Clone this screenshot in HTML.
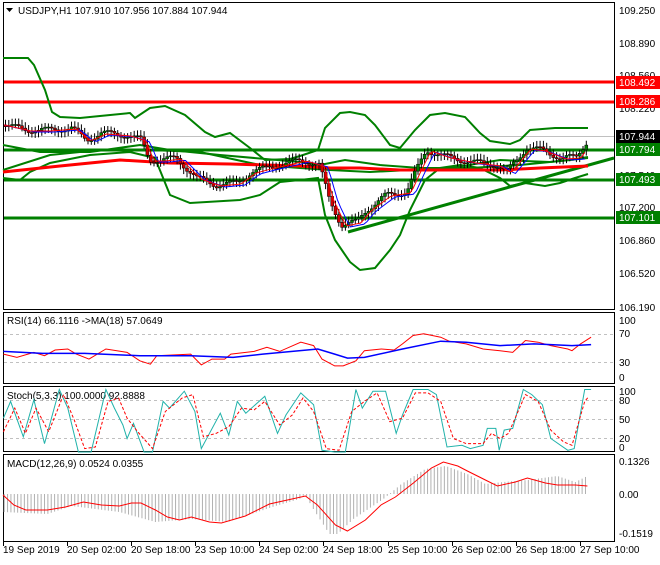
<!DOCTYPE html><html><head><meta charset="utf-8"><style>
body{margin:0;background:#fff;width:660px;height:560px;overflow:hidden;font-family:"Liberation Sans",sans-serif}
svg text{font-family:"Liberation Sans",sans-serif;font-size:10px}
</style></head><body>
<svg id="s" width="660" height="560" xmlns="http://www.w3.org/2000/svg">
<rect width="660" height="560" fill="#fff"/>
<g fill="none" stroke="#000" stroke-width="1">
<rect x="3.5" y="2.5" width="611" height="307"/>
<rect x="3.5" y="312.5" width="611" height="71"/>
<rect x="3.5" y="386.5" width="611" height="65"/>
<rect x="3.5" y="454.5" width="611" height="87"/>
</g>
<path d="M6 8h7l-3.5 4z" fill="#000"/>
<text x="18" y="14" font-size="11">USDJPY,H1  107.910 107.956 107.884 107.944</text>
<line x1="4" y1="136.5" x2="614" y2="136.5" stroke="#c0c0c0"/>
<g stroke="#f00" stroke-width="3"><line x1="4" y1="82" x2="614" y2="82"/><line x1="4" y1="102" x2="614" y2="102"/></g>
<g stroke="#008000" stroke-width="3" fill="none">
<line x1="4" y1="150" x2="614" y2="150"/><line x1="4" y1="180" x2="614" y2="180"/><line x1="4" y1="218" x2="614" y2="218"/>
<line x1="348" y1="232" x2="614" y2="158"/>
</g>
<g fill="none" stroke-width="2" stroke="#008000">
<polyline points="3,58 28,58 34,65 45,90 52,112 60,117 80,118 100,116 130,113 135,118 150,108 165,106 185,115 205,132 215,137 230,133 250,148 265,160 290,159 300,156 318,150 325,128 340,113 350,112 365,115 375,125 390,145 400,148 415,130 430,115 445,113 465,117 480,133 490,141 510,144 520,140 530,130 555,128 588,128"/>
<polyline points="3,178 20,180 30,172 50,163 90,155 130,152 155,158 170,195 190,203 240,200 260,195 280,182 300,180 318,178 325,215 335,240 350,262 360,270 375,268 390,250 400,235 410,210 425,180 440,168 460,165 480,168 500,178 510,186 525,183 545,186 560,183 575,178 588,174"/>
<polyline points="3,145 40,152 90,152 140,145 170,150 220,155 300,162 320,165 345,160 380,165 420,168 470,168 520,165 570,160 588,157"/>
<polyline points="3,170 50,155 100,150 150,150 200,152 260,165 300,168 330,170 370,172 410,170 450,168 500,160 550,162 588,158"/>
</g>
<polyline fill="none" stroke="#f00" stroke-width="3" points="3,172 60,166 120,160 170,163 230,164 300,166 330,168 360,168 400,170 450,170 500,170 540,168 588,166"/>
<g id="cand"></g>
<polyline id="ma1" fill="none" stroke="#00f" stroke-width="1"/>
<polyline id="ma2" fill="none" stroke="#f00" stroke-width="1"/>
<g font-size="10" fill="#000">
<text x="619" y="14">109.250</text><text x="619" y="47">108.890</text><text x="619" y="79">108.560</text>
<text x="619" y="112">108.220</text><text x="619" y="179">107.540</text><text x="619" y="211">107.200</text>
<text x="619" y="244">106.860</text><text x="619" y="277">106.520</text><text x="619" y="311">106.190</text>
<text x="619" y="324">100</text><text x="619" y="337">70</text><text x="619" y="366">30</text><text x="619" y="381">0</text>
<text x="619" y="395">100</text><text x="619" y="404">80</text><text x="619" y="423">50</text><text x="619" y="442">20</text><text x="619" y="451">0</text>
<text x="619" y="465">0.1326</text><text x="619" y="498">0.00</text><text x="619" y="537">-0.1519</text>
</g>
<g fill="#f00"><rect x="616" y="76" width="44" height="13"/><rect x="616" y="95" width="44" height="13"/></g>
<rect x="616" y="130" width="44" height="13" fill="#000"/>
<g fill="#008000"><rect x="616" y="143" width="44" height="13"/><rect x="616" y="173" width="44" height="13"/><rect x="616" y="211" width="44" height="13"/></g>
<g fill="#fff" font-size="10"><text x="619" y="86">108.492</text><text x="619" y="105">108.286</text><text x="619" y="140">107.944</text><text x="619" y="153">107.794</text><text x="619" y="183">107.493</text><text x="619" y="221">107.101</text></g>
<g stroke="#c0c0c0" stroke-dasharray="3,3"><line x1="4" y1="334.5" x2="614" y2="334.5"/><line x1="4" y1="362.5" x2="614" y2="362.5"/>
<line x1="4" y1="400.5" x2="614" y2="400.5"/><line x1="4" y1="419.5" x2="614" y2="419.5"/><line x1="4" y1="438.5" x2="614" y2="438.5"/></g>
<text x="7" y="324">RSI(14) 66.1116  -&gt;MA(18) 57.0649</text>
<polyline id="rsir" fill="none" stroke="#f00"/>
<polyline id="rsib" fill="none" stroke="#00f" stroke-width="1.5"/>
<text x="7" y="399">Stoch(5,3,3) 100.0000 92.8888</text>
<polyline id="stt" fill="none" stroke="#20b2aa"/>
<polyline id="str" fill="none" stroke="#f00" stroke-dasharray="3,2"/>
<text x="7" y="467">MACD(12,26,9) 0.0524 0.0355</text>
<g id="hist" stroke="#b0b0b0"></g>
<polyline id="macd" fill="none" stroke="#f00"/>
<g font-size="10"><text x="3" y="553">19 Sep 2019</text><text x="67" y="553">20 Sep 02:00</text><text x="131" y="553">20 Sep 18:00</text><text x="195" y="553">23 Sep 10:00</text><text x="259" y="553">24 Sep 02:00</text><text x="323" y="553">24 Sep 18:00</text><text x="388" y="553">25 Sep 10:00</text><text x="452" y="553">26 Sep 02:00</text><text x="516" y="553">26 Sep 18:00</text><text x="580" y="553">27 Sep 10:00</text></g>
<g id="ticks" stroke="#000"></g>
</svg>
<script>
var NS="http://www.w3.org/2000/svg";
function interp(pts,x){for(var i=1;i<pts.length;i++){if(x<=pts[i][0]){var a=pts[i-1],b=pts[i];return a[1]+(b[1]-a[1])*(x-a[0])/(b[0]-a[0]);}}return pts[pts.length-1][1];}
var P=[[3,125],[25,130],[45,130],[70,128],[85,140],[100,133],[125,135],[140,140],[148,160],[160,160],[175,158],[195,178],[215,185],[235,183],[250,172],[265,168],[300,160],[318,165],[328,200],[340,225],[355,222],[365,210],[385,195],[405,192],[415,170],[425,150],[445,157],[470,162],[495,165],[505,172],[515,160],[525,148],[540,150],[560,158],[575,157],[583,145],[588,137]];
var g=document.getElementById("cand");
var prev=interp(P,3),b1="",b2="";
for(var x=4;x<=588;x+=3.3){var c=interp(P,x)+(Math.sin(x*1.7)*3);var o=prev;prev=c;
var tp=Math.min(o,c)-3-Math.abs(Math.sin(x))*3,bt=Math.max(o,c)+3+Math.abs(Math.cos(x))*3;
var e=document.createElementNS(NS,"line");e.setAttribute("x1",x+1.5);e.setAttribute("x2",x+1.5);e.setAttribute("y1",tp);e.setAttribute("y2",bt);e.setAttribute("stroke","#000");g.appendChild(e);
var rc=document.createElementNS(NS,"rect");rc.setAttribute("x",x);rc.setAttribute("width",3);rc.setAttribute("y",Math.min(o,c));rc.setAttribute("height",Math.max(1,Math.abs(o-c)));rc.setAttribute("fill",c<o?"#008000":"#d00000");rc.setAttribute("stroke","#000");rc.setAttribute("stroke-width","0.5");g.appendChild(rc);
b1+=x+","+(interp(P,x-10)+2)+" ";b2+=x+","+(interp(P,x-6)+1)+" ";}
document.getElementById("ma1").setAttribute("points",b1);
document.getElementById("ma2").setAttribute("points",b2);
function Z(id,a){var s="";for(var i=0;i<a.length;i+=2){s+=(a[i]/2.36).toFixed(1)+","+(300+a[i+1]/2.96).toFixed(1)+" ";}document.getElementById(id).setAttribute("points",s);}
Z("rsir",[8,160,40,170,80,155,105,165,130,148,160,145,180,160,210,175,250,145,300,155,330,180,355,190,370,165,450,160,475,192,500,175,530,175,545,160,580,155,600,152,630,140,660,152,710,125,740,135,760,175,790,195,810,195,840,180,860,150,900,145,930,148,950,130,975,105,1000,100,1040,110,1060,122,1100,130,1140,145,1180,150,1210,155,1240,120,1270,125,1300,135,1340,145,1350,150,1370,130,1395,110]);
Z("rsib",[8,152,100,158,200,158,330,165,450,165,550,170,620,160,750,145,790,160,820,172,860,170,950,145,1040,122,1100,125,1180,135,1260,130,1300,132,1350,135,1395,132]);
Z("stt",[8,350,25,300,55,405,80,295,105,425,140,265,160,320,185,450,215,450,250,265,270,320,290,370,300,410,315,365,340,450,360,450,385,300,400,320,435,270,460,330,475,440,520,335,540,400,560,300,580,335,625,285,655,395,675,340,710,275,740,310,760,445,790,450,815,450,840,265,855,320,880,270,910,270,935,395,950,340,975,265,1010,265,1030,280,1055,435,1090,430,1110,440,1140,430,1150,380,1170,380,1178,445,1190,385,1210,380,1235,265,1255,280,1280,310,1300,410,1340,445,1355,440,1380,265,1395,265]);
Z("str",[8,390,35,320,60,395,85,320,115,390,150,280,175,355,200,440,225,435,255,300,280,290,300,350,325,390,360,440,390,330,430,290,455,280,480,405,510,395,540,375,570,320,600,325,625,300,660,370,690,340,715,290,740,330,770,440,800,445,830,330,860,300,890,275,920,360,950,350,980,275,1010,275,1040,300,1070,410,1100,425,1140,425,1160,395,1180,410,1200,395,1240,280,1270,300,1300,385,1330,420,1350,430,1380,300,1390,285]);
var M=[[3,495],[12,505],[22,510],[40,510],[55,507],[70,502],[85,505],[100,506],[110,503],[118,503],[130,510],[140,517],[150,520],[160,517],[175,522],[185,523],[205,516],[225,504],[240,500],[255,496],[265,505],[280,525],[290,531],[305,520],[318,505],[330,497],[345,483],[360,468],[370,462],[382,466],[390,471],[405,480],[415,486],[430,482],[440,478],[455,483],[465,485],[480,485],[490,486]];
document.getElementById("macd").setAttribute("points",M.map(function(p){return (3+(p[0]-3)*1.2)+","+p[1];}).join(" "));
var H=[[3,-18],[40,-20],[60,-12],[100,-18],[130,-28],[160,-25],[190,-28],[230,-12],[250,-5],[255,0],[260,-12],[275,-40],[282,-40],[295,-25],[320,-5],[325,0],[335,10],[355,25],[372,28],[390,20],[405,10],[420,12],[440,14],[465,18],[480,12],[490,18]];
var h=document.getElementById("hist");
for(var x=4;x<=490;x+=2.8){var v=interp(H,x);var l=document.createElementNS(NS,"line");var xx=3+(x-3)*1.2;l.setAttribute("x1",xx);l.setAttribute("x2",xx);l.setAttribute("y1",494);l.setAttribute("y2",494-v);h.appendChild(l);}
var T=document.getElementById("ticks");[3,67,131,195,259,323,388,452,516,580].forEach(function(t){var l=document.createElementNS(NS,"line");l.setAttribute("x1",t+.5);l.setAttribute("x2",t+.5);l.setAttribute("y1",541);l.setAttribute("y2",546);T.appendChild(l);});
</script>
</body></html>
